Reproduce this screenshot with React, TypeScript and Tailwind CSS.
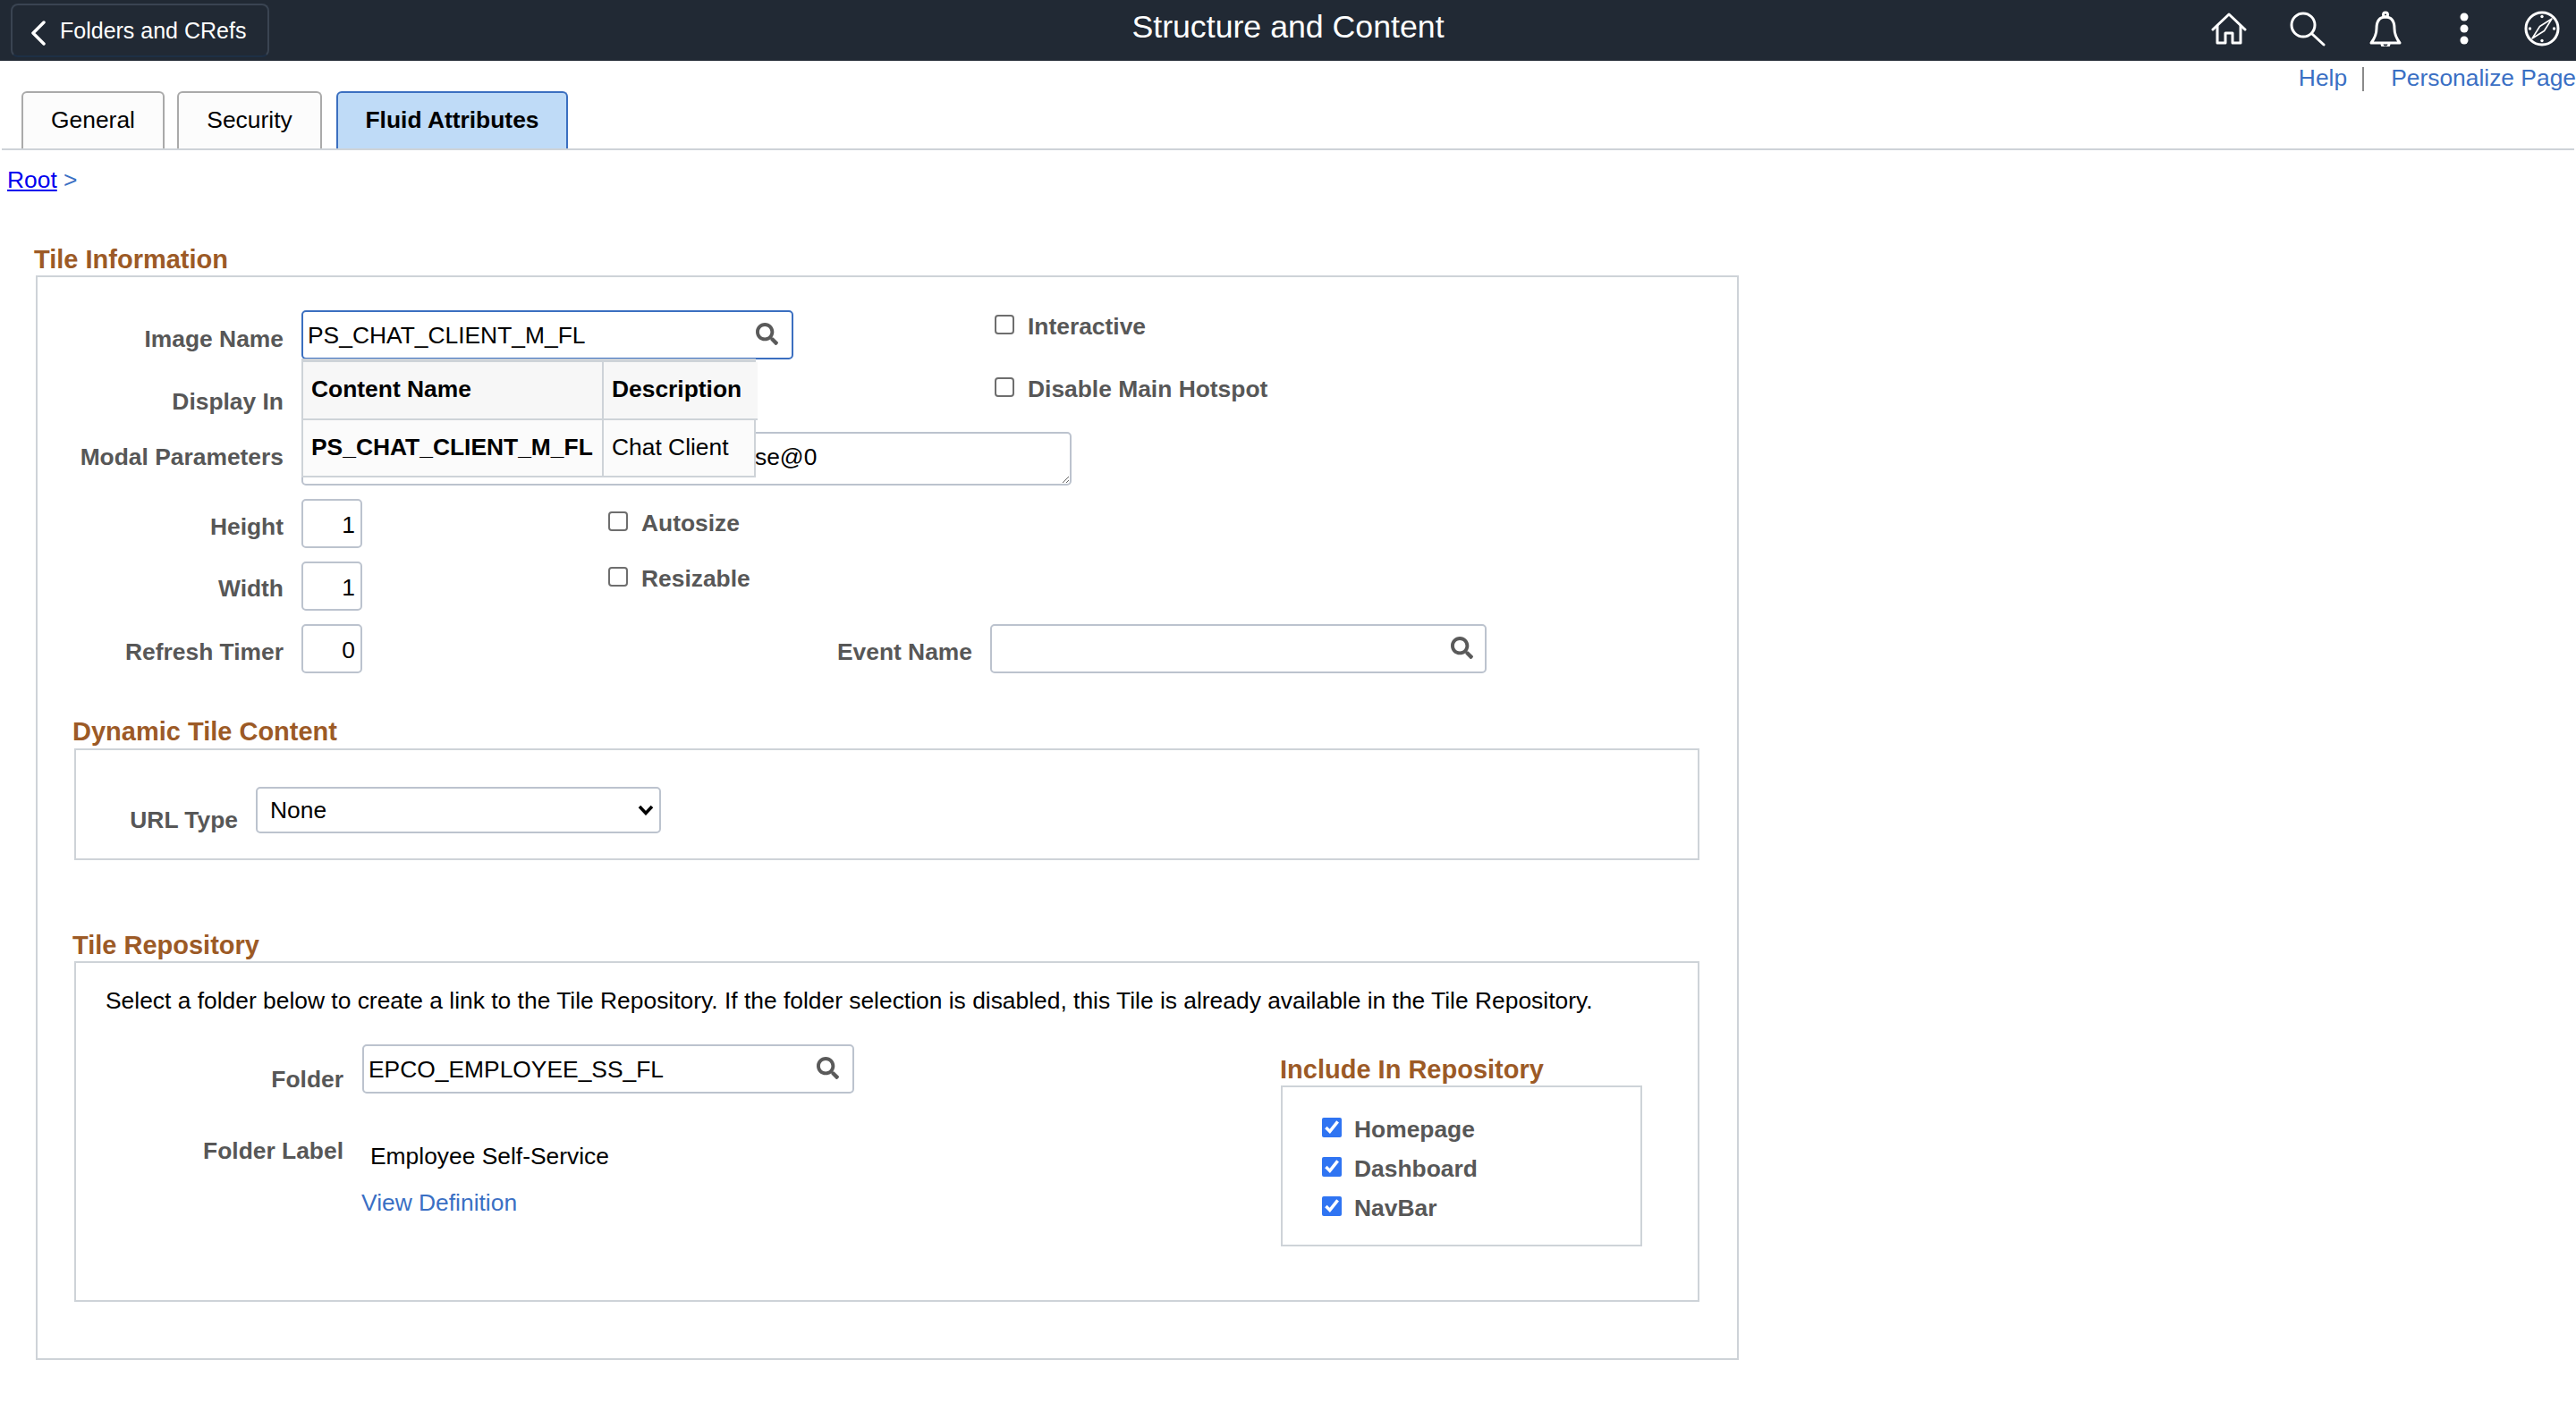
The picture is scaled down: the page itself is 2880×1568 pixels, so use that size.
import { ReactNode } from 'react';
import { FaSearch } from 'react-icons/fa';

function Label({ children, className }: { children: ReactNode; className: string }) {
  return (
    <label className={`block text-right font-bold text-[#575757] leading-[32px] ${className}`}>
      {children}
    </label>
  );
}

function Heading({ children, className }: { children: ReactNode; className: string }) {
  return <h2 className={`font-bold text-[#9c5a26] text-[29px] leading-[36px] ${className}`}>{children}</h2>;
}

function CheckField({ text, className, checked }: { text: string; className: string; checked?: boolean }) {
  return (
    <div className={`flex ${checked ? 'gap-[14px]' : 'gap-[15px]'} ${className}`}>
      <input
        type="checkbox"
        defaultChecked={checked}
        className={
          checked
            ? 'w-[22px] h-[22px] mt-[3px] accent-[#2f74f2]'
            : 'appearance-none w-[22px] h-[22px] mt-[3px] bg-white border-2 border-[#6e6e6e] rounded-[4px]'
        }
      />
      <span className="font-bold text-[#575757] leading-[32px]">{text}</span>
    </div>
  );
}

function SearchInput({ value, className, active }: { value?: string; className: string; active?: boolean }) {
  return (
    <div
      className={`flex items-center h-[55px] border-2 rounded-[5px] bg-white ${
        active ? 'border-[#3b6fc0]' : 'border-[#bcc3ce]'
      } ${className}`}
    >
      <input
        readOnly
        defaultValue={value}
        className="flex-1 min-w-0 h-full pl-[5px] pt-[2px] outline-none bg-transparent text-black"
      />
      <FaSearch className={`text-[25px] text-[#5a5a5a] mb-[3px] shrink-0 ${value ? 'mr-[15px]' : 'mr-[13px]'}`} />
    </div>
  );
}

function NumberInput({ value }: { value: string }) {
  return (
    <input
      readOnly
      defaultValue={value}
      className="w-[68px] h-[55px] border-2 border-[#bcc3ce] rounded-[5px] text-right pr-[6px] pt-[3px] outline-none text-black"
    />
  );
}

function HomeIcon() {
  return (
    <svg width="40" height="40" viewBox="0 0 40 40" fill="none" stroke="white" strokeWidth="3" strokeLinejoin="round" strokeLinecap="round">
      <path d="M2 21 L20 4 L38 21" />
      <path d="M7 17 V36 H16 V25 H24 V36 H33 V17" />
    </svg>
  );
}

function SearchIcon() {
  return (
    <svg width="40" height="40" viewBox="0 0 40 40" fill="none" stroke="white" strokeWidth="3" strokeLinecap="round">
      <circle cx="15" cy="16" r="13" />
      <path d="M25 26 L38 38" />
    </svg>
  );
}

function BellIcon() {
  return (
    <svg width="40" height="40" viewBox="0 0 40 40" fill="none" stroke="white" strokeWidth="3" strokeLinejoin="round">
      <circle cx="20" cy="4.5" r="2.5" />
      <path d="M20 7 C12 7 10 13 10 20 C10 27 7 32 4 36 H36 C33 32 30 27 30 20 C30 13 28 7 20 7 Z" />
      <path d="M16 37 A4 4 0 0 0 24 37" />
    </svg>
  );
}

function DotsIcon() {
  return (
    <svg width="40" height="40" viewBox="0 0 40 40" fill="white">
      <circle cx="20" cy="7" r="4.5" />
      <circle cx="20" cy="20" r="4.5" />
      <circle cx="20" cy="33" r="4.5" />
    </svg>
  );
}

function CompassIcon() {
  return (
    <svg width="40" height="40" viewBox="0 0 40 40" fill="none" stroke="white">
      <circle cx="20" cy="20" r="18" strokeWidth="3" />
      <path d="M31 9 L22.5 22.5 L9 31 L17.5 17.5 Z" strokeWidth="1.6" strokeLinejoin="round" />
      <g fill="white" stroke="none">
        <circle cx="20" cy="6.5" r="1.7" />
        <circle cx="20" cy="33.5" r="1.7" />
        <circle cx="6.5" cy="20" r="1.7" />
        <circle cx="33.5" cy="20" r="1.7" />
      </g>
    </svg>
  );
}

export default function App() {
  return (
    <div className="w-[2880px] h-[1568px] overflow-hidden bg-white text-black text-[26.4px] font-['Liberation_Sans',Arial,sans-serif]">
      {/* top bar */}
      <header className="grid grid-cols-[1fr_auto_1fr] items-center h-[68px] bg-[#212934]">
        <div className="self-start">
          <button className="flex items-center h-[60px] w-[289px] ml-[12px] mt-[4px] pt-[2px] border-2 border-[#3a4452] border-b-[#1d2f45] rounded-[8px] text-white">
            <svg width="18" height="28" viewBox="0 0 18 28" fill="none" stroke="white" strokeWidth="3.5" strokeLinecap="round" strokeLinejoin="round" className="ml-[20px] mt-[4px]">
              <path d="M15 2 L3 14 L15 26" />
            </svg>
            <span className="ml-[15px] text-[25px] whitespace-nowrap">Folders and CRefs</span>
          </button>
        </div>
        <h1 className="text-white text-[35.7px] leading-[44px] mb-[9px] whitespace-nowrap">Structure and Content</h1>
        <div className="flex justify-end gap-[47.5px] pr-[18px] pb-[4px]">
          <HomeIcon />
          <SearchIcon />
          <BellIcon />
          <DotsIcon />
          <CompassIcon />
        </div>
      </header>

      {/* help links */}
      <div className="flex justify-end items-start h-[34px] pt-[4px] leading-[30px] text-[#3a6fc4] whitespace-nowrap">
        <a>Help</a>
        <span className="w-[2px] h-[27px] mt-[3px] ml-[17px] mr-[30px] bg-[#8a8a8a]" />
        <a>Personalize Page</a>
      </div>

      {/* tabs */}
      <div className="flex mx-[2px] pl-[22px] gap-[14px] h-[66px] border-b-2 border-[#ced3d8]">
        <div className="flex items-center justify-center w-[160px] border-2 border-b-0 border-[#aaaaaa] rounded-t-[6px] bg-[#fcfcfc]">General</div>
        <div className="flex items-center justify-center w-[162px] border-2 border-b-0 border-[#aaaaaa] rounded-t-[6px] bg-[#fcfcfc]">Security</div>
        <div className="flex items-center justify-center w-[259px] ml-[2px] border-2 border-b-0 border-[#3b6fc0] rounded-t-[6px] bg-[#bfdbf7] font-bold">Fluid Attributes</div>
      </div>

      {/* breadcrumb */}
      <div className="mt-[17px] h-[32px] pl-[8px] leading-[32px] text-[#3a6fc4]">
        <a className="text-[#0000ee] underline">Root</a> &gt;
      </div>

      <Heading className="mt-[55px] ml-[38px]">Tile Information</Heading>

      <section className="w-[1904px] ml-[40px] pl-[1px] pb-[63px] border-2 border-[#ced3d8]">
        {/* image name */}
        <div className="relative flex h-[54px] mt-[37px]">
          <Label className="w-[274px] pt-[16px] box-content">Image Name</Label>
          <SearchInput active value="PS_CHAT_CLIENT_M_FL" className="w-[550px] ml-[20px]" />
          <CheckField text="Interactive" className="ml-[225px] mt-[2px]" />

          {/* typeahead popup */}
          <div className="absolute z-10 left-[294px] top-[54px] w-[508px] grid grid-cols-[336px_172px] border-2 border-t-4 border-[#ced3d8] bg-[#fbfbfb]">
            <div className="h-[65px] pl-[9px] pb-[2px] flex items-center font-bold bg-[#f7f7f7] border-r-2 border-b-2 border-[#ced3d8]">Content Name</div>
            <div className="h-[65px] pl-[9px] pb-[2px] flex items-center font-bold bg-[#f7f7f7] border-b-2 border-[#ced3d8]">Description</div>
            <div className="h-[62px] pl-[9px] flex items-center font-bold border-r-2 border-[#ced3d8]">PS_CHAT_CLIENT_M_FL</div>
            <div className="h-[62px] pl-[9px] flex items-center">Chat Client</div>
          </div>
        </div>

        {/* display in */}
        <div className="flex h-[82px]">
          <Label className="w-[274px] pt-[32px] box-content">Display In</Label>
          <CheckField text="Disable Main Hotspot" className="ml-[795px] mt-[18px]" />
        </div>

        {/* modal parameters */}
        <div className="flex h-[60px]">
          <Label className="w-[274px] pt-[12px] box-content">Modal Parameters</Label>
          <textarea
            readOnly
            defaultValue="se@0"
            className="w-[861px] h-[60px] ml-[20px] border-2 border-[#bcc3ce] rounded-[5px] pl-[505px] pt-[10px] leading-[32px] outline-none"
          />
        </div>

        {/* height */}
        <div className="flex h-[55px] mt-[15px]">
          <Label className="w-[274px] pt-[15px] box-content">Height</Label>
          <div className="ml-[20px]"><NumberInput value="1" /></div>
          <CheckField text="Autosize" className="ml-[275px] mt-[11px]" />
        </div>

        {/* width */}
        <div className="flex h-[55px] mt-[15px]">
          <Label className="w-[274px] pt-[14px] box-content">Width</Label>
          <div className="ml-[20px]"><NumberInput value="1" /></div>
          <CheckField text="Resizable" className="ml-[275px] mt-[3px]" />
        </div>

        {/* refresh timer */}
        <div className="flex h-[55px] mt-[15px]">
          <Label className="w-[274px] pt-[15px] box-content">Refresh Timer</Label>
          <div className="ml-[20px]"><NumberInput value="0" /></div>
          <Label className="w-[300px] ml-[382px] pt-[15px] box-content">Event Name</Label>
          <SearchInput className="w-[555px] ml-[20px]" />
        </div>

        {/* dynamic tile content */}
        <Heading className="mt-[47px] ml-[38px] h-[37px]">Dynamic Tile Content</Heading>
        <div className="flex h-[125px] ml-[40px] w-[1817px] border-2 border-[#ced3d8]">
          <Label className="w-[181px] mt-[62px]">URL Type</Label>
          <div className="relative w-[453px] h-[52px] ml-[20px] mt-[41px]">
            <select className="appearance-none w-full h-full pl-[14px] pt-[2px] border-2 border-[#bcc3ce] rounded-[5px] bg-white text-black outline-none">
              <option>None</option>
            </select>
            <svg width="18" height="12" viewBox="0 0 18 12" fill="none" stroke="black" strokeWidth="3.5" className="absolute right-[8px] top-[20px] pointer-events-none">
              <path d="M2 2 L9 9.5 L16 2" />
            </svg>
          </div>
        </div>

        {/* tile repository */}
        <Heading className="mt-[77px] ml-[38px]">Tile Repository</Heading>
        <div className="h-[381px] ml-[40px] w-[1817px] border-2 border-[#ced3d8] pl-[33px]">
          <p className="mt-[26px] leading-[32px]">
            Select a folder below to create a link to the Tile Repository. If the folder selection is disabled, this Tile is already available in the Tile Repository.
          </p>
          <div className="flex mt-[33px]">
            <div className="w-[1313px]">
              <div className="flex h-[55px]">
                <Label className="w-[266px] mt-[23px]">Folder</Label>
                <SearchInput value="EPCO_EMPLOYEE_SS_FL" className="w-[550px] ml-[21px]" />
              </div>
              <div className="flex h-[38px] mt-[48px]">
                <Label className="w-[266px]">Folder Label</Label>
                <span className="ml-[30px] mt-[6px] leading-[32px]">Employee Self-Service</span>
              </div>
              <a className="block mt-[20px] ml-[286px] leading-[32px] text-[#3a6fc4]">View Definition</a>
            </div>
            <div className="mt-[10px]">
              <Heading className="">Include In Repository</Heading>
              <div className="w-[404px] h-[180px] ml-[1px] border-2 border-[#ced3d8] pt-[31px] pl-[44px] flex flex-col gap-[12px]">
                <CheckField text="Homepage" className="" checked />
                <CheckField text="Dashboard" className="" checked />
                <CheckField text="NavBar" className="" checked />
              </div>
            </div>
          </div>
        </div>
      </section>
    </div>
  );
}
